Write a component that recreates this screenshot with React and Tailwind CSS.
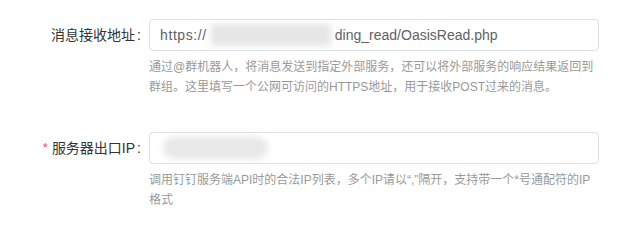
import React from 'react'

const font = { fontFamily: '"Liberation Sans", "Noto Sans CJK SC", sans-serif' }

const Field = ({ label, required, children, help }) => {
  return (
    <div className="flex items-start">
      <div className="w-[149px] h-8 pr-2 flex items-center justify-end text-[14px] text-[#333]">
        {required && <span className="text-[#f0506e] mr-[4px] text-[13px]">*</span>}
        <span>{label}</span>
        <span className="ml-[2px]">:</span>
      </div>
      <div className="w-[450px]">
        {children}
        <p className="mt-[6px] text-[12px] leading-5 text-[#999]">{help}</p>
      </div>
    </div>
  )
}

const App = () => {
  return (
    <div className="w-[628px] h-[222px] bg-white pt-[19px] overflow-hidden" style={font}>
      <Field
        label="消息接收地址"
        help="通过@群机器人，将消息发送到指定外部服务，还可以将外部服务的响应结果返回到群组。这里填写一个公网可访问的HTTPS地址，用于接收POST过来的消息。"
      >
        <div className="h-8 flex items-center border border-[#dcdfe6] rounded-[4px] pl-[10px] text-[14px] text-[#606266]">
          <span className="tracking-[0.6px]">https://</span>
          <div className="ml-[4px] w-[120px] h-[22px] bg-[#e6e6e6] blur-[3px]" />
          <span className="ml-[4px]">ding_read/OasisRead.php</span>
        </div>
      </Field>
      <div className="mt-[35px]">
        <Field
          label="服务器出口IP"
          required
          help="调用钉钉服务端API时的合法IP列表，多个IP请以“,”隔开，支持带一个*号通配符的IP格式"
        >
          <div className="h-8 flex items-center border border-[#dcdfe6] rounded-[4px] pl-[13px]">
            <div className="w-[105px] h-[22px] rounded-full bg-[#e8e8e8] blur-[3px]" />
          </div>
        </Field>
      </div>
    </div>
  )
}

export default App
